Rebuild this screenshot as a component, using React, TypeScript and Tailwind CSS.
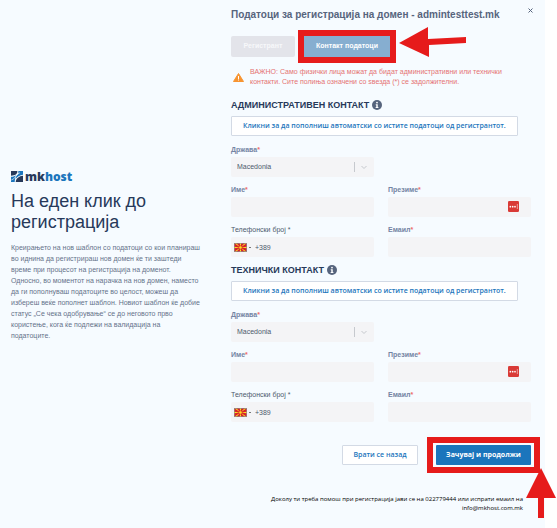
import { useState } from "react";

type ContactSectionProps = {
  id: string;
  title: string;
};

const fieldClass =
  "block h-5 w-full rounded-[2px] bg-[#f4f4f6] px-[6px] text-[7px] text-[#4d5a6d] outline-none focus:ring-1 focus:ring-[#1b75bc]";

function Logo() {
  return (
    <div className="flex items-center gap-[2px]" aria-label="mkhost">
      <svg className="h-[11px] w-3" viewBox="0 0 36 33">
        <path d="M0 0h19c1 9-7 14-19 14z" fill="#27395a" />
        <path d="M22 0h14v11c-9 1-16 5-22 12 0-6 3-10 8-14z" fill="#1b75bc" />
        <path d="M0 17c7 0 12-2 17-6-5 6-5 13-6 22H0z" fill="#1b75bc" />
        <path d="M14 33c1-11 10-18 22-19v19z" fill="#27395a" />
        <path d="M1 27C13 25 14 9 27 5" fill="none" stroke="#f6fbff" strokeWidth="2" />
      </svg>
      <span className="font-['Open_Sans',sans-serif] text-[12px] leading-[13px] font-extrabold text-[#27395a]">
        mk<span className="text-[#1b75bc]">host</span>
      </span>
    </div>
  );
}

function InfoIcon() {
  return (
    <svg className="h-[10px] w-[10px]" viewBox="0 0 20 20" aria-hidden="true">
      <circle cx="10" cy="10" r="10" fill="#56647d" />
      <circle cx="10" cy="5.2" r="1.8" fill="#fff" />
      <path d="M7.5 8.4h4v5.6h1.3v2H7.3v-2h1.3v-3.6H7.5z" fill="#fff" />
    </svg>
  );
}

function Flag() {
  return (
    <svg className="h-[9px] w-[13px] shrink-0" viewBox="0 0 39 27" aria-hidden="true">
      <rect width="39" height="27" fill="#d8202a" />
      <path
        d="M1 1h6l12.5 12.5zM38 1h-6L19.5 13.5zM1 26h6l12.5-12.5zM38 26h-6L19.5 13.5zM17 0h5l-2.5 13.5zM17 27h5l-2.5-13.5zM0 11v5l19.5-2.5zM39 11v5l-19.5-2.5z"
        fill="#fbe122"
      />
      <circle cx="19.5" cy="13.5" r="5" fill="#fbe122" stroke="#d8202a" strokeWidth="2" />
      <rect x="1" y="1" width="37" height="25" fill="none" stroke="#8c8c8c" strokeWidth="2" />
    </svg>
  );
}

function PasswordBadge() {
  return (
    <svg className="absolute top-1 right-3 h-[11px] w-[11px]" viewBox="0 0 33 33" aria-hidden="true">
      <rect width="33" height="33" rx="4" fill="#d93a36" />
      <circle cx="7" cy="17" r="2.5" fill="#fff" />
      <circle cx="14" cy="17" r="2.5" fill="#fff" />
      <circle cx="21" cy="17" r="2.5" fill="#fff" />
      <path d="M28 9v15" stroke="#fff" strokeWidth="1.5" />
    </svg>
  );
}

function Label({ htmlFor, text }: { htmlFor: string; text: string }) {
  return (
    <label htmlFor={htmlFor} className="mb-[2px] block text-[7px] leading-[10px] font-bold text-[#7484a3]">
      {text}
      <span className="text-[#ef6b6b]">*</span>
    </label>
  );
}

function ContactSection({ id, title }: ContactSectionProps) {
  return (
    <section className="mb-[7px]">
      <h2 className="flex items-center gap-[3px] text-[9px] leading-3 font-bold text-[#27395a]">
        {title}
        <InfoIcon />
      </h2>
      <button
        type="button"
        className="mt-[5px] block h-5 rounded-[1px] border border-[#d3dae5] bg-white px-[11px] font-['Open_Sans',sans-serif] text-[7px] font-semibold whitespace-nowrap text-[#1b75bc]"
      >
        Кликни за да пополниш автоматски со истите податоци од регистрантот.
      </button>

      <div className="mt-[9px] grid grid-cols-2 gap-x-[14px] gap-y-2">
        <div className="col-start-1">
          <Label htmlFor={`${id}-country`} text="Држава" />
          <div className="relative">
            <select id={`${id}-country`} className={`${fieldClass} appearance-none`}>
              <option>Macedonia</option>
            </select>
            <svg
              className="pointer-events-none absolute top-[5px] right-[5px] h-[10px] w-[15px]"
              viewBox="0 0 15 10"
              fill="none"
              stroke="#c6c9ce"
              aria-hidden="true"
            >
              <path d="M0.5 0v10M7.5 4l2.5 2.5L12.5 4" />
            </svg>
          </div>
        </div>
        <div className="col-start-1">
          <Label htmlFor={`${id}-name`} text="Име" />
          <input id={`${id}-name`} type="text" className={fieldClass} />
        </div>
        <div>
          <Label htmlFor={`${id}-surname`} text="Презиме" />
          <div className="relative">
            <input id={`${id}-surname`} type="text" className={fieldClass} />
            <PasswordBadge />
          </div>
        </div>
        <div>
          <label htmlFor={`${id}-phone`} className="mb-[2px] block text-[7px] leading-[10px] text-[#4d5a6d]">
            Телефонски број *
          </label>
          <div className="flex h-5 items-center rounded-[2px] bg-[#f4f4f6] pl-[3px]">
            <Flag />
            <span className="ml-[2px] h-px w-[2px] bg-[#777]" />
            <input
              id={`${id}-phone`}
              type="tel"
              defaultValue="+389"
              className="ml-1 h-5 min-w-0 flex-1 text-[7px] text-[#4d5a6d] outline-none"
            />
          </div>
        </div>
        <div>
          <Label htmlFor={`${id}-email`} text="Емаил" />
          <input id={`${id}-email`} type="email" className={fieldClass} />
        </div>
      </div>
    </section>
  );
}

export default function App() {
  const [tab, setTab] = useState("contact");

  return (
    <div className="min-h-screen bg-white pr-3 font-['Liberation_Sans',Arial,sans-serif]">
      <div className="flex min-h-screen bg-[#f6fbff] pr-[14px] pl-[11px]">
        <aside className="flex-[190] pt-[170px]">
          <Logo />
          <h1 className="mt-2 text-[18px] leading-[21px] text-[#27395a]">
            На еден клик до
            <br />
            регистрација
          </h1>
          <p className="mt-[9px] text-[7px] leading-[11px] text-[#65728a]">
            Креирањето на нов шаблон со податоци со кои планираш во иднина да регистрираш нов домен ќе ти заштеди
            време при процесот на регистрација на доменот.
            <br />
            Односно, во моментот на нарачка на нов домен, наместо да ги пополнуваш податоците во целост, можеш да
            избереш веќе пополнет шаблон. Новиот шаблон ќе добие статус „Се чека одобрување“ се до неговото прво
            користење, кога ќе подлежи на валидација на податоците.
          </p>
        </aside>

        <main className="ml-[30px] flex-[300]">
          <header className="relative pt-2">
            <p className="text-[10px] leading-[14px] font-bold whitespace-nowrap text-[#56647d]">
              Податоци за регистрација на домен - admintesttest.mk
            </p>
            <button type="button" aria-label="Затвори" className="absolute top-2 -right-[2px]">
              <svg className="block h-[5px] w-[5px]" viewBox="0 0 5 5" stroke="#56647d" fill="none">
                <path d="M0.5 0.5l4 4M4.5 0.5l-4 4" />
              </svg>
            </button>
          </header>

          <div className="mt-2 flex items-center">
            <button
              type="button"
              aria-pressed={tab === "registrant"}
              onClick={() => setTab("registrant")}
              className="h-[21px] w-16 rounded-[2px] bg-[#e3e4ea] text-[7px] font-bold text-[#f7f8fa]"
            >
              Регистрант
            </button>
            <div className="ml-[3px] border-6 border-[#e61b1b]">
              <button
                type="button"
                aria-pressed={tab === "contact"}
                onClick={() => setTab("contact")}
                className="block h-[21px] w-[86px] bg-[#86aed0] text-[7px] font-bold text-white"
              >
                Контакт податоци
              </button>
            </div>
            <svg
              className="-mt-[3px] ml-[3px] h-[30px] w-[67px] self-start"
              viewBox="0 0 67 30"
              fill="#e61b1b"
              aria-hidden="true"
            >
              <path d="M0 16L29 0v12l38-2v6l-37 2v12z" />
            </svg>
          </div>

          <div className="mt-1 flex items-center gap-[6px] pl-[2px]">
            <svg className="h-[9px] w-[11px] shrink-0" viewBox="0 0 22 18" aria-hidden="true">
              <path d="M11 1L21 17H1z" fill="#f79431" stroke="#f79431" strokeWidth="2" strokeLinejoin="round" />
              <path d="M10 6h2v6h-2zM10 13h2v2h-2z" fill="#fff" />
            </svg>
            <p className="text-[7px] leading-[10px] text-[#e57373]">
              ВАЖНО: Само физички лица можат да бидат административни или технички
              <br />
              контакти. Сите полиња означени со ѕвезда (*) се задолжителни.
            </p>
          </div>

          <div className="mt-3">
            <ContactSection id="admin" title="АДМИНИСТРАТИВЕН КОНТАКТ" />
            <ContactSection id="tech" title="ТЕХНИЧКИ КОНТАКТ" />
          </div>

          <div className="-mr-[9px] mt-[15px] flex items-center justify-end gap-[9px]">
            <button
              type="button"
              className="h-5 w-[76px] rounded-[1px] border border-[#d3dae5] bg-white font-['Open_Sans',sans-serif] text-[7px] font-semibold text-[#1b75bc]"
            >
              Врати се назад
            </button>
            <div className="relative border-6 border-[#e61b1b] px-[3px] py-[2px]">
              <button
                type="button"
                className="block h-5 w-[95px] rounded-[1px] bg-[#1b75bc] font-['Open_Sans',sans-serif] text-[7px] font-bold text-white"
              >
                Зачувај и продолжи
              </button>
              <svg
                className="absolute top-[25px] -right-[22px] h-[50px] w-[30px]"
                viewBox="0 0 30 50"
                fill="#e61b1b"
                aria-hidden="true"
              >
                <path d="M15 0l15 30H18v20h-6V30H0z" />
              </svg>
            </div>
          </div>

          <p className="mt-[22px] mr-2 text-right font-['Open_Sans',sans-serif] text-[6px] leading-[9px] font-medium whitespace-nowrap text-black">
            Доколу ти треба помош при регистрација јави се на 022779444 или испрати емаил на
            <br />
            info@mkhost.com.mk
          </p>
        </main>
      </div>
    </div>
  );
}
